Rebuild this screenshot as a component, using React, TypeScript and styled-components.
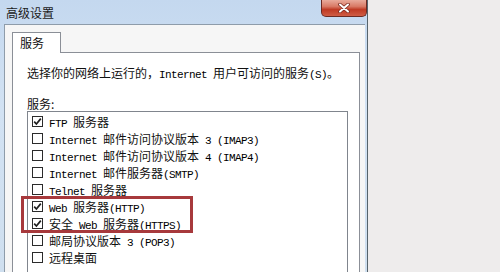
import React from 'react'
import styled, { createGlobalStyle } from 'styled-components'

const GlobalStyle = createGlobalStyle`
  html, body {
    margin: 0;
    padding: 0;
    height: 100%;
    overflow: hidden;
    background: #eeecec;
  }
  #root {
    height: 100%;
  }
`

const Page = styled.div`
  display: flex;
  height: 272px;
  overflow: hidden;
  font-family: 'Noto Sans CJK SC', 'Liberation Sans', sans-serif;
  font-size: 12px;
  color: #111;
`

const Window = styled.div`
  width: 367px;
  display: flex;
  flex-direction: column;
  background: linear-gradient(180deg, #c4d8ef 0%, #d2e2f3 40%, #cfdfef 100%);
  border-right: 1px solid #56636b;
`

const TitleBar = styled.div`
  flex-shrink: 0;
  height: 24px;
  display: flex;
  align-items: center;
  padding-left: 6px;
`

const Title = styled.span`
  font-size: 12px;
  line-height: 16px;
  color: #1b1b1b;
  padding-top: 1px;
`

const CloseButton = styled.div`
  margin-left: auto;
  align-self: flex-start;
  width: 44px;
  height: 16px;
  border: 1px solid #6c2a22;
  border-top: none;
  border-radius: 0 0 5px 5px;
  background: linear-gradient(180deg, #e9aa9b 0%, #d97a66 40%, #bf3a24 60%, #cf5d45 100%);
  display: flex;
  align-items: center;
  justify-content: center;
`

const Client = styled.div`
  flex: 1;
  min-height: 0;
  overflow: hidden;
  display: flex;
  flex-direction: column;
  margin: 0 2px 0 4px;
  padding: 7px 5px 0 7px;
  background: #f6f6f6;
  border-top: 1px solid #8e9caa;
  border-left: 1px solid #8e9caa;
`

const TabStrip = styled.div`
  flex-shrink: 0;
  display: flex;
`

const Tab = styled.div`
  position: relative;
  z-index: 1;
  width: 49px;
  height: 21px;
  margin-bottom: -1px;
  padding-left: 7px;
  box-sizing: border-box;
  border: 1px solid #8b8f97;
  border-bottom: none;
  background: #fff;
  line-height: 20px;
  font-size: 12px;
`

const Panel = styled.div`
  flex: 1 0 auto;
  border: 1px solid #8b8f97;
  border-bottom: none;
  background: #fff;
  padding: 11px 11px 0 14px;
`

const Line = styled.div`
  display: flex;
  align-items: center;
  height: 16px;
  white-space: nowrap;
`

const Label = styled(Line)`
  margin-top: 15px;
`

const Latin = styled.span`
  font-family: 'Liberation Mono', 'DejaVu Sans Mono', monospace;
  font-size: 11px;
  letter-spacing: -0.6px;
  color: #000;
`

const ListBox = styled.div`
  position: relative;
  border: 1px solid #80858d;
  border-bottom: none;
  padding: 1px 0 0 4px;
  height: 200px;
`

const Row = styled.div`
  display: flex;
  align-items: center;
  height: 17px;
  gap: 6px;
  white-space: nowrap;
`

const Box = styled.span`
  width: 11px;
  height: 11px;
  box-sizing: border-box;
  border: 1px solid #2b2b2b;
  background: #fff;
  display: flex;
  align-items: center;
  justify-content: center;
  flex-shrink: 0;
`

const Highlight = styled.div`
  position: absolute;
  left: -7px;
  top: 84px;
  width: 172px;
  height: 37px;
  box-sizing: border-box;
  border: 3px solid #a7393c;
`

function Mixed({ text }: { text: string }) {
  const parts = text.split(/([\x00-\x7F]+)/).filter(Boolean)
  return (
    <span>
      {parts.map((p, i) =>
        /^[\x00-\x7F]+$/.test(p) ? <Latin key={i}>{p}</Latin> : <span key={i}>{p}</span>
      )}
    </span>
  )
}

function Checkbox({ checked }: { checked: boolean }) {
  return (
    <Box>
      {checked && (
        <svg width='9' height='9' viewBox='0 0 9 9'>
          <path d='M1.2 4.6 L3.4 7 L7.8 1.6' fill='none' stroke='#1f1f1f' strokeWidth='1.7' />
        </svg>
      )}
    </Box>
  )
}

const services = [
  { checked: true, label: 'FTP 服务器' },
  { checked: false, label: 'Internet 邮件访问协议版本 3 (IMAP3)' },
  { checked: false, label: 'Internet 邮件访问协议版本 4 (IMAP4)' },
  { checked: false, label: 'Internet 邮件服务器(SMTP)' },
  { checked: false, label: 'Telnet 服务器' },
  { checked: true, label: 'Web 服务器(HTTP)' },
  { checked: true, label: '安全 Web 服务器(HTTPS)' },
  { checked: false, label: '邮局协议版本 3 (POP3)' },
  { checked: false, label: '远程桌面' }
]

export default function App() {
  return (
    <>
      <GlobalStyle />
      <Page>
        <Window>
          <TitleBar>
            <Title>高级设置</Title>
            <CloseButton>
              <svg width='12' height='10' viewBox='0 0 12 10'>
                <path d='M2 1.5 L10 8.5 M10 1.5 L2 8.5' stroke='#7a2b22' strokeWidth='3.6' strokeLinecap='round' />
                <path d='M2 1.5 L10 8.5 M10 1.5 L2 8.5' stroke='#fff' strokeWidth='2' strokeLinecap='round' />
              </svg>
            </CloseButton>
          </TitleBar>
          <Client>
            <TabStrip>
              <Tab>服务</Tab>
            </TabStrip>
            <Panel>
              <Line>
                <Mixed text='选择你的网络上运行的，Internet 用户可访问的服务(S)。' />
              </Line>
              <Label>服务:</Label>
              <ListBox>
                {services.map((s) => (
                  <Row key={s.label}>
                    <Checkbox checked={s.checked} />
                    <Mixed text={s.label} />
                  </Row>
                ))}
                <Highlight />
              </ListBox>
            </Panel>
          </Client>
        </Window>
      </Page>
    </>
  )
}
